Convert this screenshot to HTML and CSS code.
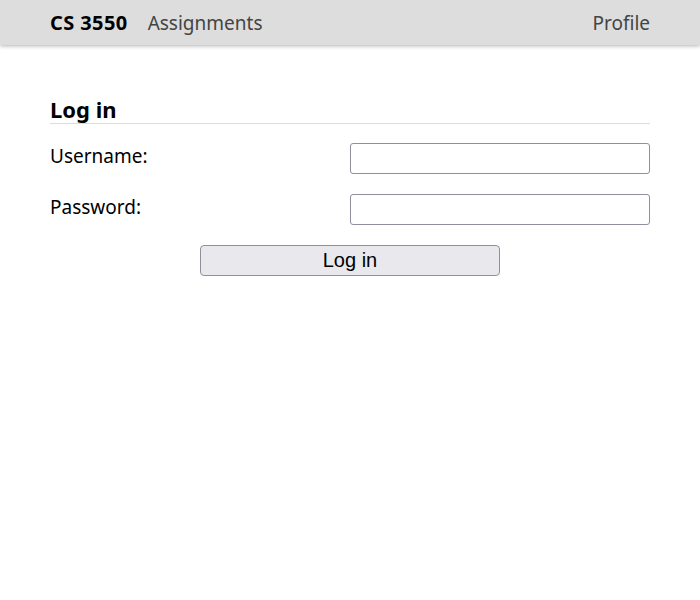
FILE: index.html
```html
<!DOCTYPE html>
<html>
<head>
<meta charset="utf-8">
<link rel="stylesheet" href="styles.css">
</head>
<body>
<header class="topbar">
  <nav class="nav-left">
    <a class="brand" href="#">CS 3550</a>
    <a class="nav-link" href="#">Assignments</a>
  </nav>
  <a class="nav-link" href="#">Profile</a>
</header>
<main class="content">
  <h1 class="title">Log in</h1>
  <form class="login">
    <label class="label" for="u">Username:</label>
    <input class="field" id="u" type="text">
    <label class="label" for="p">Password:</label>
    <input class="field" id="p" type="password">
    <button class="submit" type="button">Log in</button>
  </form>
</main>
</body>
</html>
```
FILE: styles.css
```css
html, body {
  margin: 0;
  padding: 0;
  background: #fff;
}
body {
  font-family: "Noto Sans", "Open Sans", sans-serif;
  color: #000;
}
.topbar {
  height: 45px;
  box-sizing: border-box;
  background: #dddddd;
  box-shadow: 0 1px 4px rgba(0,0,0,0.3);
  display: flex;
  align-items: center;
  justify-content: space-between;
  padding: 0 50px;
  font-size: 19px;
}
.nav-left {
  display: flex;
  gap: 20px;
  align-items: baseline;
}
.topbar a {
  text-decoration: none;
}
.brand {
  color: #000;
  font-weight: 700;
  font-size: 20px;
  letter-spacing: 0.4px;
}
.nav-link {
  color: #444;
}
.content {
  width: 600px;
  margin: 0 auto;
  padding-top: 50px;
}
.title {
  font-size: 22px;
  font-weight: 700;
  margin: 0;
  line-height: 28px;
  padding-bottom: 0;
  border-bottom: 1px solid #dddddd;
}
.login {
  display: grid;
  grid-template-columns: 1fr 1fr;
  row-gap: 20px;
  margin-top: 19px;
}
.label {
  font-size: 19px;
  line-height: 27px;
  align-self: start;
}
.field {
  height: 31px;
  box-sizing: border-box;
  border: 1px solid #8f8f9d;
  border-radius: 3px;
  margin: 0;
  font: inherit;
}
.submit {
  grid-column: 1 / 3;
  justify-self: center;
  width: 300px;
  height: 31px;
  box-sizing: border-box;
  background: #e9e9ed;
  border: 1px solid #8f8f9d;
  border-radius: 4px;
  font-family: "Liberation Sans", Arial, sans-serif;
  font-size: 20px;
  color: #000;
  padding: 0;
}
```
